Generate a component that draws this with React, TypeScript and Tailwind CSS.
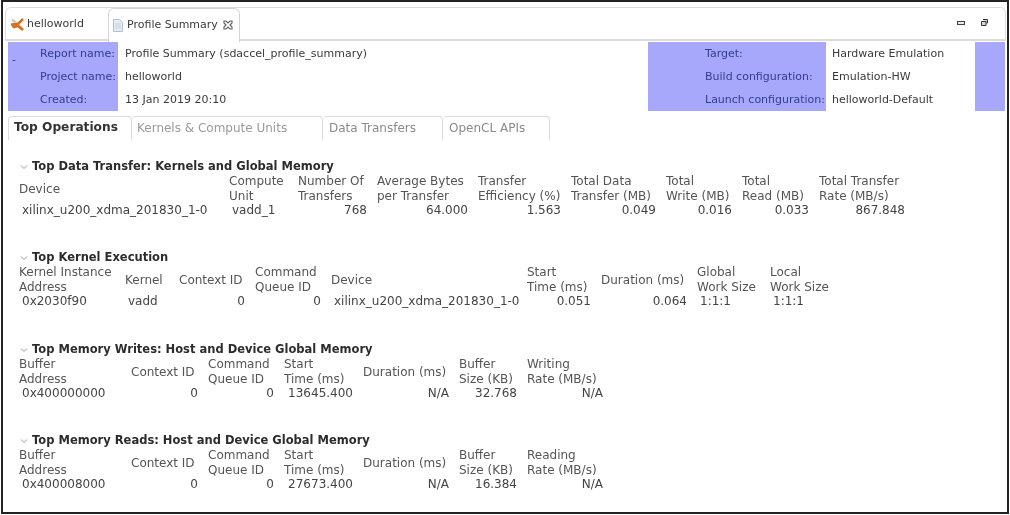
const font = "font-['DejaVu_Sans',sans-serif]";

type Cell = { text: string; align?: "left" | "right" };

type Section = {
  title: string;
  height: string;
  columns: string;
  headers: string[];
  values: Cell[];
};

const sections: Section[] = [
  {
    title: "Top Data Transfer: Kernels and Global Memory",
    height: "h-[91px]",
    columns: "grid-cols-[210px_69px_79px_101px_93px_95px_76px_77px_96px]",
    headers: [
      "Device",
      "Compute\nUnit",
      "Number Of\nTransfers",
      "Average Bytes\nper Transfer",
      "Transfer\nEfficiency (%)",
      "Total Data\nTransfer (MB)",
      "Total\nWrite (MB)",
      "Total\nRead (MB)",
      "Total Transfer\nRate (MB/s)",
    ],
    values: [
      { text: "xilinx_u200_xdma_201830_1-0" },
      { text: "vadd_1" },
      { text: "768", align: "right" },
      { text: "64.000", align: "right" },
      { text: "1.563", align: "right" },
      { text: "0.049", align: "right" },
      { text: "0.016", align: "right" },
      { text: "0.033", align: "right" },
      { text: "867.848", align: "right" },
    ],
  },
  {
    title: "Top Kernel Execution",
    height: "h-[92px]",
    columns: "grid-cols-[106px_54px_76px_76px_196px_74px_96px_73px_70px]",
    headers: [
      "Kernel Instance\nAddress",
      "Kernel",
      "Context ID",
      "Command\nQueue ID",
      "Device",
      "Start\nTime (ms)",
      "Duration (ms)",
      "Global\nWork Size",
      "Local\nWork Size",
    ],
    values: [
      { text: "0x2030f90" },
      { text: "vadd" },
      { text: "0", align: "right" },
      { text: "0", align: "right" },
      { text: "xilinx_u200_xdma_201830_1-0" },
      { text: "0.051", align: "right" },
      { text: "0.064", align: "right" },
      { text: "1:1:1" },
      { text: "1:1:1" },
    ],
  },
  {
    title: "Top Memory Writes: Host and Device Global Memory",
    height: "h-[91px]",
    columns: "grid-cols-[112px_77px_76px_79px_96px_68px_86px]",
    headers: [
      "Buffer\nAddress",
      "Context ID",
      "Command\nQueue ID",
      "Start\nTime (ms)",
      "Duration (ms)",
      "Buffer\nSize (KB)",
      "Writing\nRate (MB/s)",
    ],
    values: [
      { text: "0x400000000" },
      { text: "0", align: "right" },
      { text: "0", align: "right" },
      { text: "13645.400", align: "right" },
      { text: "N/A", align: "right" },
      { text: "32.768", align: "right" },
      { text: "N/A", align: "right" },
    ],
  },
  {
    title: "Top Memory Reads: Host and Device Global Memory",
    height: "h-[60px]",
    columns: "grid-cols-[112px_77px_76px_79px_96px_68px_86px]",
    headers: [
      "Buffer\nAddress",
      "Context ID",
      "Command\nQueue ID",
      "Start\nTime (ms)",
      "Duration (ms)",
      "Buffer\nSize (KB)",
      "Reading\nRate (MB/s)",
    ],
    values: [
      { text: "0x400008000" },
      { text: "0", align: "right" },
      { text: "0", align: "right" },
      { text: "27673.400", align: "right" },
      { text: "N/A", align: "right" },
      { text: "16.384", align: "right" },
      { text: "N/A", align: "right" },
    ],
  },
];

function ProfileSection({ section }: { section: Section }) {
  return (
    <div className={section.height}>
      <div className="flex h-[15px] items-center">
        <svg width="8" height="6" viewBox="0 0 8 6" className="ml-[1px] mr-[4px]">
          <path d="M1 1.5 L4 4.5 L7 1.5" fill="none" stroke="#9a9a9a" strokeWidth="1" />
        </svg>
        <span className="text-[11.5px] font-bold leading-[15px] text-[#2c2c2c]">{section.title}</span>
      </div>
      <div className={`grid ${section.columns} text-[12px] leading-[15px] text-[#555]`}>
        {section.headers.map((h) => (
          <div key={h} className="flex h-[30px] items-center whitespace-pre">
            {h}
          </div>
        ))}
        {section.values.map((v, i) => (
          <div
            key={i}
            className={`-mt-px h-[15px] whitespace-pre text-[#444] ${v.align === "right" ? "pr-[10px] text-right" : "pl-[3px]"}`}
          >
            {v.text}
          </div>
        ))}
      </div>
    </div>
  );
}

function MetaLabel({ children }: { children: string }) {
  return <div className="h-[23px] whitespace-nowrap leading-[23px] text-[#2f3f8f]">{children}</div>;
}

function MetaValue({ children }: { children: string }) {
  return <div className="h-[23px] whitespace-nowrap leading-[23px] text-[#3a3a3a]">{children}</div>;
}

export default function App() {
  return (
    <div className={`${font} h-[515px] w-[1010px] overflow-hidden bg-white px-px blur-[0.35px]`}>
      <div className="h-[514px] w-[1008px] border-2 border-[#222] bg-white pl-[5px] pr-[1px] pt-[5px]">
        {/* Editor tabs */}
        <div className="-ml-[3px] flex h-[34px] items-end rounded-t-[6px] border-x border-t border-[#dcdcdc] shadow-[inset_0_-2px_0_#dcdcdc]">
          <div className="flex h-[32px] w-[102px] items-center gap-[3px] self-start pl-[5px] text-[11px] text-[#3a3a3a]">
            <svg width="13" height="13" viewBox="0 0 13 13">
              <path d="M1 1.5 L6.5 6 L12 11.5" fill="none" stroke="#c9c9bd" strokeWidth="2.5" />
              <path d="M12 1 L7 6 L1 6.5 L3 9 L7 8 L12 12" fill="none" stroke="#d8701f" strokeWidth="2.5" />
            </svg>
            helloworld
          </div>
          <div className="flex h-[34px] w-[132px] items-center self-start rounded-t-[6px] border-x border-t border-[#d4d4d4] bg-white pl-[4px] text-[11px] text-[#3a3a3a]">
            <svg width="10" height="13" viewBox="0 0 10 13" className="mr-[4px]">
              <path d="M.5 .5 H6.5 L9.5 3.5 V12.5 H.5 Z" fill="#e6ecf4" stroke="#b4c0d0" />
              <path d="M2 5 H8 M2 7 H8 M2 9 H8" stroke="#c4d0de" />
            </svg>
            <span className="whitespace-nowrap">Profile Summary</span>
            <svg width="10" height="10" viewBox="0 0 10 10" className="mb-[2px] ml-[5px]">
              <path d="M1 1 H3 L5 3 L7 1 H9 V3 L7 5 L9 7 V9 H7 L5 7 L3 9 H1 V7 L3 5 L1 3 Z" fill="none" stroke="#666" strokeWidth="1.2" />
            </svg>
          </div>
          <div className="flex-1" />
          <div className="mb-[15px] mr-[17px] flex items-center gap-[16px]">
            <svg width="8" height="4" viewBox="0 0 8 4">
              <rect x=".5" y=".5" width="7" height="3" fill="#e8e8f0" stroke="#444" />
            </svg>
            <svg width="7" height="7" viewBox="0 0 7 7">
              <path d="M2 .5 H6.5 V4 H5.5 M.5 2.5 H5 V6.5 H.5 Z" fill="#d8d8d8" stroke="#333" />
            </svg>
          </div>
        </div>

        {/* Report header */}
        <div className="mt-px flex h-[69px] text-[11px]">
          <div className="relative w-[110px] bg-[#a7a7fb] pl-[32px]">
            <span className="absolute left-[4px] top-[10px] text-[#2f3f8f]">-</span>
            <MetaLabel>Report name:</MetaLabel>
            <MetaLabel>Project name:</MetaLabel>
            <MetaLabel>Created:</MetaLabel>
          </div>
          <div className="w-[530px] pl-[7px]">
            <MetaValue>Profile Summary (sdaccel_profile_summary)</MetaValue>
            <MetaValue>helloworld</MetaValue>
            <MetaValue>13 Jan 2019 20:10</MetaValue>
          </div>
          <div className="w-[178px] bg-[#a7a7fb] pl-[57px]">
            <MetaLabel>Target:</MetaLabel>
            <MetaLabel>Build configuration:</MetaLabel>
            <MetaLabel>Launch configuration:</MetaLabel>
          </div>
          <div className="w-[149px] pl-[6px]">
            <MetaValue>Hardware Emulation</MetaValue>
            <MetaValue>Emulation-HW</MetaValue>
            <MetaValue>helloworld-Default</MetaValue>
          </div>
          <div className="w-[30px] bg-[#a7a7fb]" />
        </div>

        {/* Report tabs */}
        <div className="mt-[5px] flex h-[24px] text-[12px]">
          <div className="flex w-[124px] items-center rounded-t-[4px] border-x border-t border-[#dcdcdc] pb-[2px] pl-[5px] text-[12.2px] font-bold text-[#333]">
            Top Operations
          </div>
          <div className="flex w-[191px] items-center rounded-t-[4px] border-r border-t border-[#dcdcdc] pb-[2px] pl-[5px] text-[#9a9a9a]">
            Kernels &amp; Compute Units
          </div>
          <div className="flex w-[120px] items-center rounded-t-[4px] border-r border-t border-[#dcdcdc] pb-[2px] pl-[6px] text-[#8a8a8a]">
            Data Transfers
          </div>
          <div className="flex w-[107px] items-center rounded-t-[4px] border-r border-t border-[#dcdcdc] pb-[2px] pl-[6px] text-[#8a8a8a]">
            OpenCL APIs
          </div>
        </div>

        {/* Tables */}
        <div className="pl-[11px] pt-[19px]">
          {sections.map((s) => (
            <ProfileSection key={s.title} section={s} />
          ))}
        </div>
      </div>
    </div>
  );
}
